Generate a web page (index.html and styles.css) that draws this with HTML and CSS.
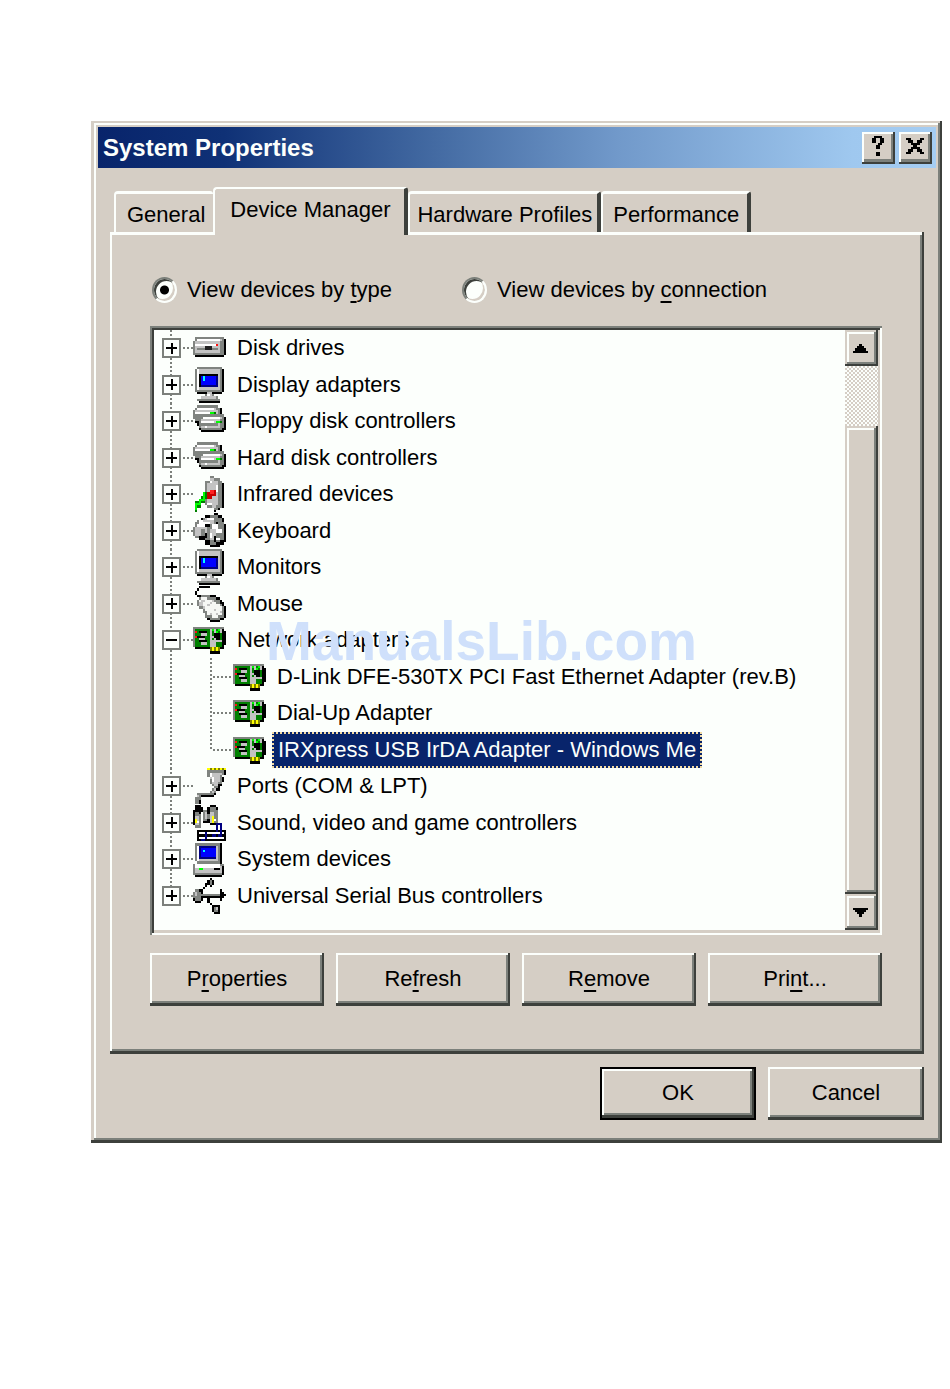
FILE: index.html
```html
<!DOCTYPE html>
<html lang="en">
<head>
<meta charset="utf-8">
<title>System Properties</title>
<link rel="stylesheet" href="styles.css">
</head>
<body>
<svg class="sprites" aria-hidden="true">
  <symbol id="disk" viewBox="0 0 16 16" preserveAspectRatio="none">
    <path fill="#000" d="M2 4H16V11H15V12H1V11H14V4Z"/>
    <path fill="#808480" d="M1 3H15V4H16V10H15V11H0V5H1Z"/>
    <path fill="#000" d="M15 4H16V11H15Z"/>
    <path fill="#c3c3c3" d="M2 4H14V5H13V10H1V5H2Z"/>
    <path fill="#fff" d="M2 4H13V5H2ZM1 6H12V7H1Z"/>
    <path fill="#808480" d="M2 8H12V9H2Z"/>
    <path fill="#222" d="M6 7H9V9H6Z"/>
    <path fill="#f11" d="M11 6H12V7H11Z"/>
  </symbol>
  <symbol id="monitor" viewBox="0 0 16 16" preserveAspectRatio="none">
    <path fill="#000" d="M14 1H15V11H14V12H2V11H14ZM4 14H12V15H13V16H3V15H2V15H4Z"/>
    <path fill="#808480" d="M2 0H14V1H14V11H1V1H2ZM6 12H10V13H12V14H13V15H2V14H5V13H6Z"/>
    <path fill="#c3c3c3" d="M2 1H13V10H2ZM7 11H9V13H11V14H4V13H7Z"/>
    <path fill="#fff" d="M2 1H3V10H2ZM7 12H8V13H7Z"/>
    <path fill="#000" d="M3 3H12V9H3Z"/>
    <path fill="#000080" d="M4 4H12V9H4Z"/>
    <path fill="#00f" d="M4 4H11V8H4Z"/>
    <path fill="#0ff" d="M5 4H6V6H5Z"/>
  </symbol>
  <symbol id="drives" viewBox="0 0 16 16" preserveAspectRatio="none">
    <path fill="#000" d="M12 2H14V5H15V6H16V12H15V13H4V12H3V10H2V9H1V8H13Z"/>
    <path fill="#808480" d="M2 1H12V2H13V5H15V6H15V11H14V12H4V11H3V8H1V7H0V3H1V2H2Z"/>
    <path fill="#c3c3c3" d="M2 2H11V3H12V5H4V6H1V3H2ZM5 6H14V7H13V11H4V7H5Z"/>
    <path fill="#fff" d="M2 2H10V3H2ZM1 4H8V5H1ZM5 6H13V7H5ZM4 8H10V9H4ZM6 10H7V11H6Z"/>
    <path fill="#808480" d="M1 5H8V6H1ZM4 9H12V10H4ZM10 5H15V6H10Z"/>
    <path fill="#0f0" d="M8 4H10V5H8ZM11 8H13V9H11Z"/>
    <path fill="#007c00" d="M10 4H11V5H10ZM13 8H14V9H13Z"/>
  </symbol>
  <symbol id="infrared" viewBox="0 0 16 16" preserveAspectRatio="none">
    <path fill="#000" d="M14 3H15V14H13V15H11V16H10V15H12V14H14Z"/>
    <path fill="#808480" d="M8 0H10V1H13V2H14V14H12V15H10V14H7V13H6V2H8Z"/>
    <path fill="#c3c3c3" d="M8 1H10V2H12V13H11V14H9V13H7V3H8Z"/>
    <path fill="#fff" d="M8 2H9V3H8ZM11 4H12V7H11ZM7 12H9V13H7Z"/>
    <path fill="#c80000" d="M8 6H11V9H9V10H7V7H8Z"/>
    <path fill="#f22" d="M8 6H10V8H8Z"/>
    <path fill="#008000" d="M5 7H7V10H6V12H5V12H4V14H2V16H1V11H3V10H4V9H5Z"/>
    <path fill="#0f0" d="M5 7H6V11H4V13H2V15H1V12H3V10H5Z"/>
  </symbol>
  <symbol id="keyboard" viewBox="0 0 16 16" preserveAspectRatio="none">
    <path fill="#000" d="M6 1H10V0H12V1H14V2H15V5H16V13H15V14H13V15H8V14H6V12H3V11H2V10H5V8H4V2H6Z"/>
    <path fill="#808480" d="M2 3H5V2H8V1H12V2H14V4H15V7H15V12H13V13H11V14H8V12H6V10H3V11H1V10H0V6H1V4H2Z"/>
    <path fill="#c3c3c3" d="M3 3H6V2H9V3H10V5H8V6H7V9H6V7H4V10H1V6H2V5H3ZM8 7H11V12H8Z"/>
    <path fill="#fff" d="M3 3H5V4H8V5H6V6H2V5H3ZM7 2H10V3H7ZM9 5H12V7H14V9H11V7H9ZM8 9H9V11H8ZM11 11H13V12H11Z"/>
    <path fill="#000" d="M6 5H8V6H6ZM11 4H12V5H11ZM10 10H11V13H10ZM6 9H7V11H6Z"/>
  </symbol>
  <symbol id="mouse" viewBox="0 0 16 16" preserveAspectRatio="none">
    <path fill="#000" d="M3 0H8V1H3ZM2 1H3V2H2ZM1 2H2V4H1ZM2 4H4V5H2ZM7 4H11V5H13V6H14V7H15V9H16V14H15V15H13V16H8V15H7V14H9V15H13V14H15V9H13V7H11V5H7Z"/>
    <path fill="#808480" d="M4 4H8V5H11V6H13V8H14V9H15V14H13V15H8V14H6V12H5V10H3V9H2V6H3V5H4Z"/>
    <path fill="#f5f7f4" d="M4 5H7V6H10V7H11V8H13V9H14V13H12V14H9V13H7V11H6V9H4V8H3V6H4Z"/>
    <path fill="#c3c3c3" d="M4 6H6V7H5V9H6V10H5V9H3V7H4ZM9 6H10V7H9V8H8V9H7V8H8V7H9ZM11 12H12V13H11ZM13 11H14V12H13ZM10 10H11V11H10ZM8 12H9V13H8Z"/>
  </symbol>
  <symbol id="card" viewBox="0 0 16 16" preserveAspectRatio="none">
    <path fill="#000" d="M14 3H15V4H16V10H15V12H13V14H8V12H1V11H14Z"/>
    <path fill="#808480" d="M0 2H15V3H14V4H1V11H0Z"/>
    <path fill="#008000" d="M1 3H14V11H1Z"/>
    <path fill="#c3c3c3" d="M8 3H9V11H8ZM10 3H11V5H10ZM13 3H14V5H13ZM9 6H11V8H14V9H11V11H9V8H10V7H9Z"/>
    <path fill="#000" d="M3 4H7V5H3ZM2 6H6V7H2ZM3 8H7V9H3ZM2 10H6V10H2ZM10 5H13V8H11V7H10Z"/>
    <path fill="#c3c3c3" d="M4 5H7V6H4ZM3 7H6V8H3ZM4 9H7V10H4Z"/>
    <path fill="#0f0" d="M9 3H10V4H9ZM12 3H13V4H12ZM11 4H12V5H11Z"/>
    <path fill="#f11" d="M1 4H2V5H1ZM1 6H2V7H1Z"/>
    <path fill="#808000" d="M8 11H13V13H8Z"/>
    <path fill="#ff0" d="M9 11H10V13H9ZM11 11H12V13H11Z"/>
  </symbol>
  <symbol id="port" viewBox="0 0 16 16" preserveAspectRatio="none">
    <path fill="#ff0" d="M7 0H16V1H7Z"/>
    <path fill="#808000" d="M8 0H9V1H8ZM10 0H11V1H10ZM12 0H13V1H12ZM14 0H15V1H14Z"/>
    <path fill="#000" d="M15 1H16V3H15V6H14V8H13V10H11V12H10V13H4V16H3V12H9V10H10V8H12V7H14V4H15Z"/>
    <path fill="#808480" d="M7 1H15V3H14V7H12V9H11V11H10V12H4V14H3V16H1V13H2V11H8V10H9V9H10V8H9V7H8V4H7Z"/>
    <path fill="#c3c3c3" d="M8 2H14V3H13V6H12V8H10V7H9V5H8ZM10 9H11V10H10V11H3V13H2V12H3V11H9V10H10Z"/>
    <path fill="#fff" d="M8 2H9V4H10V6H9V4H8Z"/>
  </symbol>
  <symbol id="sound" viewBox="0 0 16 16" preserveAspectRatio="none">
    <path fill="#000" d="M1 0H4V1H5V3H4V10H1V9H0V2H1ZM8 0H11V1H12V9H8V8H5V7H7V1H8ZM2 11H16V16H2Z"/>
    <path fill="#fff" d="M3 12H15V13H3ZM3 14H15V15H3Z"/>
    <path fill="#808480" d="M1 3H3V4H4V10H1ZM5 2H7V7H5ZM8 1H11V2H12V8H8V6H7V4H8Z"/>
    <path fill="#c3c3c3" d="M1 5H3V9H1ZM6 3H7V6H6ZM8 3H10V8H8Z"/>
    <path fill="#ff0" d="M1 6H2V8H1ZM9 5H10V8H9Z"/>
    <path fill="#fff" d="M2 7H3V8H2ZM10 6H11V7H10Z"/>
    <path fill="#000080" d="M6 12H7V15H6V16H4V15H6ZM11 8H14V14H12V13H13V9H12V12H11V14H9V13H11Z"/>
  </symbol>
  <symbol id="system" viewBox="0 0 16 16" preserveAspectRatio="none">
    <path fill="#000" d="M13 1H14V10H15V15H14V16H1V15H13Z"/>
    <path fill="#808480" d="M1 1H13V2H14V9H13V10H15V15H0V10H2V9H1Z"/>
    <path fill="#000" d="M13 2H14V10H13ZM14 11H15V15H14Z"/>
    <path fill="#c3c3c3" d="M2 2H12V9H2ZM1 11H14V14H1Z"/>
    <path fill="#fff" d="M2 2H3V9H2ZM1 10H13V12H1Z"/>
    <path fill="#000080" d="M3 2H11V8H3Z"/>
    <path fill="#00f" d="M4 3H11V7H4Z"/>
    <path fill="#0ff" d="M5 4H6V5H5Z"/>
    <path fill="#0f0" d="M3 12H5V13H3Z"/>
    <path fill="#000" d="M10 12H13V13H10Z"/>
  </symbol>
  <symbol id="usb" viewBox="0 0 16 16" preserveAspectRatio="none">
    <path fill="#000" d="M4 5H5V4H6V2H8V3H7V4H6V5H5V6H4ZM7 8H8V11H9V12H10V13H9V12H8V11H7Z"/>
    <path fill="#000" d="M1 5H4V6H5V7H13V5H14V6H15V7H16V8H15V9H14V10H13V9H5V10H4V11H1V10H0V6H1ZM7 1H8V0H9V1H10V3H9V4H8V3H7ZM10 12H13V16H10V15H9V13H10Z"/>
    <path fill="#808480" d="M1 5H3V6H4V10H1V9H0V6H1ZM8 1H9V3H8ZM4 7H13V8H4ZM10 13H12V15H10Z"/>
    <path fill="#c3c3c3" d="M1 6H2V8H1ZM11 13H12V14H11Z"/>
  </symbol>
</svg>

<main class="window">
  <header class="titlebar">
    <h1 class="title">System Properties</h1>
    <button class="caption" type="button" aria-label="Help">
      <svg class="glyph help" viewBox="0 0 6 9" preserveAspectRatio="none"><path d="M1 0H5V1H6V3H5V4H4V6H2V4H3V3H4V1H2V3H0V1H1ZM2 7H4V9H2Z"/></svg>
    </button>
    <button class="caption" type="button" aria-label="Close">
      <svg class="glyph close" viewBox="0 0 8 7" preserveAspectRatio="none"><path d="M0 0H2V1H3V2H5V1H6V0H8V1H7V2H6V3H5V4H6V5H7V6H8V7H6V6H5V5H3V6H2V7H0V6H1V5H2V4H3V3H2V2H1V1H0Z"/></svg>
    </button>
  </header>

  <nav class="tabs" role="tablist">
    <button class="tab" type="button" role="tab">General</button>
    <button class="tab active" type="button" role="tab" aria-selected="true">Device Manager</button>
    <button class="tab" type="button" role="tab">Hardware Profiles</button>
    <button class="tab" type="button" role="tab">Performance</button>
  </nav>

  <section class="panel">
    <div class="views">
      <label class="view"><input class="radio" type="radio" name="view" checked><span>View devices by <u>t</u>ype</span></label>
      <label class="view"><input class="radio" type="radio" name="view"><span>View devices by <u>c</u>onnection</span></label>
    </div>

    <div class="listbox">
      <ul class="tree">
        <li class="node"><button class="expander" type="button" aria-label="Expand"></button><i class="link"></i><svg class="icon"><use href="#disk"/></svg><span class="label">Disk drives</span></li>
        <li class="node"><button class="expander" type="button" aria-label="Expand"></button><i class="link"></i><svg class="icon"><use href="#monitor"/></svg><span class="label">Display adapters</span></li>
        <li class="node"><button class="expander" type="button" aria-label="Expand"></button><i class="link"></i><svg class="icon"><use href="#drives"/></svg><span class="label">Floppy disk controllers</span></li>
        <li class="node"><button class="expander" type="button" aria-label="Expand"></button><i class="link"></i><svg class="icon"><use href="#drives"/></svg><span class="label">Hard disk controllers</span></li>
        <li class="node"><button class="expander" type="button" aria-label="Expand"></button><i class="link"></i><svg class="icon"><use href="#infrared"/></svg><span class="label">Infrared devices</span></li>
        <li class="node"><button class="expander" type="button" aria-label="Expand"></button><i class="link"></i><svg class="icon"><use href="#keyboard"/></svg><span class="label">Keyboard</span></li>
        <li class="node"><button class="expander" type="button" aria-label="Expand"></button><i class="link"></i><svg class="icon"><use href="#monitor"/></svg><span class="label">Monitors</span></li>
        <li class="node"><button class="expander" type="button" aria-label="Expand"></button><i class="link"></i><svg class="icon"><use href="#mouse"/></svg><span class="label">Mouse</span></li>
        <li class="node"><button class="expander open" type="button" aria-label="Collapse"></button><i class="link"></i><svg class="icon"><use href="#card"/></svg><span class="label">Network adapters</span></li>
        <li class="node child"><i class="link"></i><svg class="icon"><use href="#card"/></svg><span class="label">D-Link DFE-530TX PCI Fast Ethernet Adapter (rev.B)</span></li>
        <li class="node child"><i class="link"></i><svg class="icon"><use href="#card"/></svg><span class="label">Dial-Up Adapter</span></li>
        <li class="node child final"><i class="link"></i><svg class="icon"><use href="#card"/></svg><span class="label selected">IRXpress USB IrDA Adapter - Windows Me</span></li>
        <li class="node"><button class="expander" type="button" aria-label="Expand"></button><i class="link"></i><svg class="icon"><use href="#port"/></svg><span class="label">Ports (COM &amp; LPT)</span></li>
        <li class="node"><button class="expander" type="button" aria-label="Expand"></button><i class="link"></i><svg class="icon"><use href="#sound"/></svg><span class="label">Sound, video and game controllers</span></li>
        <li class="node"><button class="expander" type="button" aria-label="Expand"></button><i class="link"></i><svg class="icon"><use href="#system"/></svg><span class="label">System devices</span></li>
        <li class="node end"><button class="expander" type="button" aria-label="Expand"></button><i class="link"></i><svg class="icon"><use href="#usb"/></svg><span class="label">Universal Serial Bus controllers</span></li>
      </ul>
      <div class="scrollbar">
        <button class="arrow" type="button" aria-label="Scroll up"><svg class="tri" viewBox="0 0 15 9"><path d="M6 0H9V2H11V4H13V7H15V9H0V7H2V4H4V2H6Z"/></svg></button>
        <div class="track"></div>
        <div class="thumb"></div>
        <button class="arrow" type="button" aria-label="Scroll down"><svg class="tri" viewBox="0 0 15 9"><path d="M0 0H15V2H13V4H11V6H9V9H6V6H4V4H2V2H0Z"/></svg></button>
      </div>
      <div class="watermark">ManualsLib.com</div>
    </div>

    <div class="actions">
      <button class="button" type="button">P<u>r</u>operties</button>
      <button class="button" type="button">Re<u>f</u>resh</button>
      <button class="button" type="button">R<u>e</u>move</button>
      <button class="button" type="button">Pri<u>n</u>t...</button>
    </div>
  </section>

  <footer class="footer">
    <button class="button default" type="button">OK</button>
    <button class="button" type="button">Cancel</button>
  </footer>
</main>
</body>
</html>
```
FILE: styles.css
```css
:root {
  --face: #d5cec5;
  --light: #fcfffc;
  --shade: #7c807b;
  --dark: #3d403c;
  --navy: #08246b;
}

* { box-sizing: border-box; }

body {
  margin: 0;
  padding: 121px 8px 0 91px;
  background: #fff;
  color: #000;
  font: 22px/32px "Liberation Sans", Arial, sans-serif;
}

button {
  margin: 0;
  padding: 0;
  color: inherit;
  font: inherit;
  background: var(--face);
  border: 0;
  border-radius: 0;
}

u {
  text-decoration-thickness: 2px;
  text-underline-offset: 4px;
  text-decoration-skip-ink: none;
}

.sprites { position: absolute; width: 0; height: 0; }
.sprites path { shape-rendering: crispEdges; }

.window {
  padding: 6px 6px 23px 7px;
  background: var(--face);
  box-shadow:
    inset -2px -3px var(--dark),
    inset 3px 2px var(--face),
    inset -4px -5px var(--shade),
    inset 5px 4px var(--light);
}

.titlebar {
  display: flex;
  align-items: center;
  gap: 4px;
  height: 41px;
  padding: 0 4px 0 5px;
  background: linear-gradient(90deg, #08246b, #0f3176 15%, #436aa2 40%, #7199ca 62%, #9fc8ef 90%, #a5cdf2);
}

.title {
  flex: 1;
  margin: 0;
  color: var(--light);
  font-size: 24px;
  font-weight: bold;
}

.caption {
  display: grid;
  place-items: center;
  width: 33px;
  height: 32px;
  padding: 0 2px 3px 0;
  box-shadow:
    inset -2px -2px var(--dark),
    inset 2px 2px var(--light),
    inset -4px -5px var(--shade);
}

.glyph { shape-rendering: crispEdges; }
.help { width: 12px; height: 20px; }
.close { width: 18px; height: 16px; }

.tabs {
  display: flex;
  align-items: flex-end;
  margin: 19px 0 0 16px;
}

.tab {
  height: 41px;
  padding: 4px 5px 0 7px;
  border: solid;
  border-width: 3px 4px 0 2px;
  border-color: var(--light) var(--dark) var(--light) var(--light);
  border-radius: 4px 3px 0 0;
  white-space: nowrap;
}

.tab:first-child {
  padding: 4px 8px 0 11px;
  border-right-width: 0;
}

.tab:last-child { padding: 4px 8px 0 10px; }

.tab.active {
  position: relative;
  z-index: 1;
  height: 48px;
  margin-bottom: -3px;
  padding: 0 14px 5px 15px;
  border-top-width: 2px;
}

.panel {
  margin: 0 12px 0 12px;
  padding: 40px 42px 48px 40px;
  box-shadow:
    inset -2px -3px var(--dark),
    inset 2px 3px var(--light),
    inset -4px -5px var(--shade);
}

.views {
  display: flex;
  gap: 70px;
  padding-left: 2px;
}

.view {
  display: flex;
  align-items: center;
  gap: 10px;
  height: 36px;
  white-space: nowrap;
}

.radio {
  appearance: none;
  width: 25px;
  height: 26px;
  margin: 0;
  border: 2px solid;
  border-color: var(--shade) var(--light) var(--light) var(--shade);
  border-radius: 50%;
  background: var(--light);
  box-shadow: inset 2px 2px var(--dark), inset -2px -2px var(--face);
}

.radio:checked { background: radial-gradient(circle, #000 4px, var(--light) 5px); }

.listbox {
  position: relative;
  display: flex;
  margin-top: 18px;
  padding: 4px 4px 5px;
  background: var(--light);
  box-shadow:
    inset 2px 2px var(--shade),
    inset -2px -2px var(--light),
    inset 4px 4px var(--dark),
    inset -4px -5px var(--face);
}

.tree {
  flex: 1;
  display: grid;
  grid-template-rows: repeat(8, 36px 37px);
  min-width: 0;
  margin: 0;
  padding: 0 0 16px;
  list-style: none;
}

.node {
  --dots: repeating-linear-gradient(var(--shade) 0 2px, transparent 2px 4px);
  display: flex;
  align-items: center;
  padding-left: 8px;
  background: var(--dots) 16px 0 / 2px 100% no-repeat;
  white-space: nowrap;
}

.node.end { background-size: 2px 50%; }

.node.child {
  padding-left: 57px;
  background: var(--dots) 16px 0 / 2px 100% no-repeat, var(--dots) 56px 0 / 2px 100% no-repeat;
}

.node.final { background-size: 2px 100%, 2px 50%; }

.expander {
  width: 19px;
  height: 20px;
  border: 2px solid var(--shade);
  background:
    linear-gradient(#000, #000) center / 11px 2px no-repeat,
    linear-gradient(#000, #000) center / 2px 11px no-repeat,
    var(--light);
}

.expander.open {
  background: linear-gradient(#000, #000) center / 11px 2px no-repeat, var(--light);
}

.link {
  width: 12px;
  height: 2px;
  background: repeating-linear-gradient(90deg, transparent 0 2px, var(--shade) 2px 4px);
}

.child .link { width: 22px; }

.icon { flex: none; width: 33px; height: 36px; }

.label {
  margin-left: 6px;
  padding: 0 5px;
}

.selected {
  padding: 0 4px;
  border: 2px dotted #f3dba4;
  background: var(--navy);
  color: var(--light);
}

.scrollbar {
  display: flex;
  flex-direction: column;
  width: 33px;
}

.arrow, .thumb {
  background: var(--face);
  box-shadow:
    inset -2px -2px var(--dark),
    inset 2px 2px var(--face),
    inset -4px -4px var(--shade),
    inset 4px 4px var(--light);
}

.arrow {
  display: grid;
  place-items: center;
  height: 36px;
  padding-right: 2px;
}

.tri { width: 15px; height: 9px; }

.track {
  flex: 60;
  background: repeating-conic-gradient(var(--face) 0 25%, var(--light) 0 50%) 0 0 / 4px 4px;
}

.thumb { flex: 468; }

.watermark {
  position: absolute;
  top: 286px;
  left: 116px;
  color: #cfe0fb;
  font: bold 55px/58px "Liberation Sans", Arial, sans-serif;
  pointer-events: none;
}

.actions {
  display: grid;
  grid-template-columns: repeat(4, 1fr);
  gap: 12px;
  margin-top: 18px;
}

.button {
  height: 53px;
  padding: 0 0 2px;
  box-shadow:
    inset -2px -3px var(--dark),
    inset 2px 2px var(--light),
    inset -4px -5px var(--shade);
}

.footer {
  display: flex;
  justify-content: flex-end;
  gap: 12px;
  margin: 13px 12px 0;
}

.footer .button { width: 156px; }

.button.default {
  border: 2px solid #000;
}
```
